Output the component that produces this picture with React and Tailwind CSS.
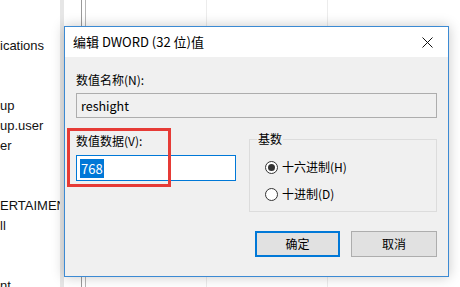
import React from 'react';

const LIST_ROWS = ['', '', 'ications', '', '', 'up', 'up.user', 'er', '', '', 'ERTAIMENT', 'll', '', '', 'nt'];

const ui = { fontFamily: '"Noto Sans CJK SC", "Liberation Sans", sans-serif' };

function Radio({ checked, label }) {
    return (
        <div className="flex items-center h-[16px] gap-[4px]">
            <span className="w-[13px] h-[13px] rounded-full border border-[#333] bg-white flex items-center justify-center">
                {checked && <span className="w-[7px] h-[7px] rounded-full bg-[#333]" />}
            </span>
            <span className="text-[12px] text-black leading-[16px]">{label}</span>
        </div>
    );
}

export default function App() {
    return (
        <div className="relative w-[460px] h-[287px] overflow-hidden bg-white" style={ui}>
            {/* Registry editor behind the dialog */}
            <div className="flex h-full">
                <div className="w-[60px] -mt-[4px]" style={{ fontFamily: '"Liberation Sans", sans-serif' }}>
                    {LIST_ROWS.map((t, i) => (
                        <div key={i} className="h-[20px] leading-[20px] text-[13px] text-[#111] whitespace-nowrap">
                            {t}
                        </div>
                    ))}
                </div>
                <div className="w-[4px] bg-[#e6e6e6]" />
                <div className="w-[17px]" />
                <div className="w-px bg-[#9a9a9a]" />
                <div className="w-[3px]" />
                <div className="w-px bg-[#b5b5b5]" />
                <div className="w-[120px]" />
                <div className="w-px bg-[#ececec]" />
                <div className="w-[120px]" />
                <div className="w-px bg-[#ececec]" />
            </div>

            {/* Edit DWORD dialog */}
            <div className="absolute left-[64px] top-[26px] w-[385px] h-[251px] border border-[#3c8ad3] bg-[#f0f0f0] shadow-[0_0_12px_rgba(0,0,0,0.22)] flex flex-col">
                <div className="h-[30px] bg-white flex items-center justify-between pl-[8px] pr-[10px]">
                    <span className="text-[13px] text-black">编辑 DWORD (32 位)值</span>
                    <svg width="11" height="11" viewBox="0 0 11 11" className="mr-[5px]">
                        <path d="M0.5 0.5 L10.5 10.5 M10.5 0.5 L0.5 10.5" stroke="#111" strokeWidth="1" />
                    </svg>
                </div>

                <div className="flex flex-col px-[11px] pt-[15px] text-[12px] leading-[16px] text-black">
                    <span>数值名称(N):</span>
                    <div className="mt-[5px] h-[25px] border border-[#adadad] bg-[#f0f0f0] flex items-center px-[4px] text-[12.5px]">
                        reshight
                    </div>

                    <div className="flex items-start mt-[15px] gap-[13px]">
                        <div className="w-[160px] flex flex-col">
                            <span>数值数据(V):</span>
                            <div className="mt-[6px] h-[26px] border border-[#0078d7] bg-white flex items-center px-[3px]">
                                <span className="bg-[#0078d7] text-white leading-[19px] text-[13px] px-[1px]">768</span>
                            </div>
                        </div>
                        <div className="relative flex-1 mt-[6px] h-[73px] border border-[#dcdcdc] flex flex-col pl-[15px] pt-[19px] gap-[11px]">
                            <span className="absolute -top-[9px] left-[7px] px-[1px] bg-[#f0f0f0]">基数</span>
                            <Radio checked label="十六进制(H)" />
                            <Radio label="十进制(D)" />
                        </div>
                    </div>

                    <div className="flex justify-end gap-[11px] mt-[19px]">
                        <button className="w-[85px] h-[26px] border-2 border-[#0078d7] bg-[#e1e1e1] text-[12px]">确定</button>
                        <button className="w-[86px] h-[26px] border border-[#adadad] bg-[#e1e1e1] text-[12px]">取消</button>
                    </div>
                </div>
            </div>

            {/* Red annotation box */}
            <div className="absolute left-[67px] top-[128px] w-[104px] h-[59px] border-[3px] border-[#e63b36]" />
        </div>
    );
}
